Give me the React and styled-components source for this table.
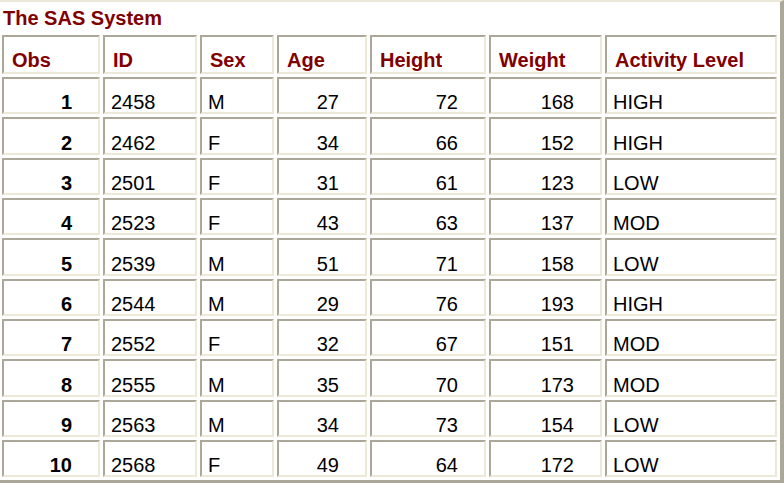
import React from "react";
import styled, { createGlobalStyle } from "styled-components";

const rows = [
  [1, 2458, "M", 27, 72, 168, "HIGH"],
  [2, 2462, "F", 34, 66, 152, "HIGH"],
  [3, 2501, "F", 31, 61, 123, "LOW"],
  [4, 2523, "F", 43, 63, 137, "MOD"],
  [5, 2539, "M", 51, 71, 158, "LOW"],
  [6, 2544, "M", 29, 76, 193, "HIGH"],
  [7, 2552, "F", 32, 67, 151, "MOD"],
  [8, 2555, "M", 35, 70, 173, "MOD"],
  [9, 2563, "M", 34, 73, 154, "LOW"],
  [10, 2568, "F", 49, 64, 172, "LOW"],
];

const columns = [
  { label: "Obs", width: 98 },
  { label: "ID", width: 94 },
  { label: "Sex", width: 74 },
  { label: "Age", width: 90 },
  { label: "Height", width: 116 },
  { label: "Weight", width: 113 },
  { label: "Activity Level", width: 172 },
];

const GlobalStyle = createGlobalStyle`
  * {
    box-sizing: border-box;
  }
  body {
    margin: 0;
    background: #fff;
    overflow: hidden;
    font-family: "Liberation Sans", Arial, sans-serif;
  }
`;

const Page = styled.div`
  width: 784px;
  border-top: 2px solid #ece9d8;
  border-right: 4px solid #aca899;
  border-bottom: 3px solid #aca899;
  background: #fff;
`;

const Title = styled.div`
  height: 30px;
  padding: 1px 0 0 3px;
  font-size: 20px;
  line-height: 30px;
  font-weight: bold;
  color: #800000;
`;

const Table = styled.table`
  table-layout: fixed;
  width: 781px;
  margin-left: -1px;
  border-collapse: separate;
  border-spacing: 3px;
  font-size: 20px;
`;

const HeadCell = styled.th`
  height: 39px;
  padding: 0 4px 0 8px;
  text-align: left;
  vertical-align: bottom;
  font-weight: bold;
  color: #800000;
  border-top: 2px solid #aca899;
  border-left: 2px solid #aca899;
  border-bottom: 2px solid #ece9d8;
  border-right: 2px solid #ece9d8;
  white-space: nowrap;
`;

const Cell = styled.td`
  height: 37.33px;
  padding: ${(p) => (p.$num ? "0 26px 0 4px" : "0 4px 0 6px")};
  text-align: ${(p) => (p.$num ? "right" : "left")};
  vertical-align: bottom;
  line-height: 20px;
  font-weight: ${(p) => (p.$bold ? "bold" : "normal")};
  color: #000;
  border-top: 2px solid #aca899;
  border-left: 2px solid #aca899;
  border-bottom: 2px solid #ece9d8;
  border-right: 2px solid #ece9d8;
  white-space: nowrap;
`;

export default function App() {
  return (
    <>
      <GlobalStyle />
      <Page>
        <Title>The SAS System</Title>
        <Table>
          <colgroup>
            {columns.map((c) => (
              <col key={c.label} style={{ width: c.width }} />
            ))}
          </colgroup>
          <thead>
            <tr>
              {columns.map((c) => (
                <HeadCell key={c.label}>{c.label}</HeadCell>
              ))}
            </tr>
          </thead>
          <tbody>
            {rows.map((r) => (
              <tr key={r[0]}>
                <Cell $num $bold>{r[0]}</Cell>
                <Cell>{r[1]}</Cell>
                <Cell>{r[2]}</Cell>
                <Cell $num>{r[3]}</Cell>
                <Cell $num>{r[4]}</Cell>
                <Cell $num>{r[5]}</Cell>
                <Cell>{r[6]}</Cell>
              </tr>
            ))}
          </tbody>
        </Table>
      </Page>
    </>
  );
}
